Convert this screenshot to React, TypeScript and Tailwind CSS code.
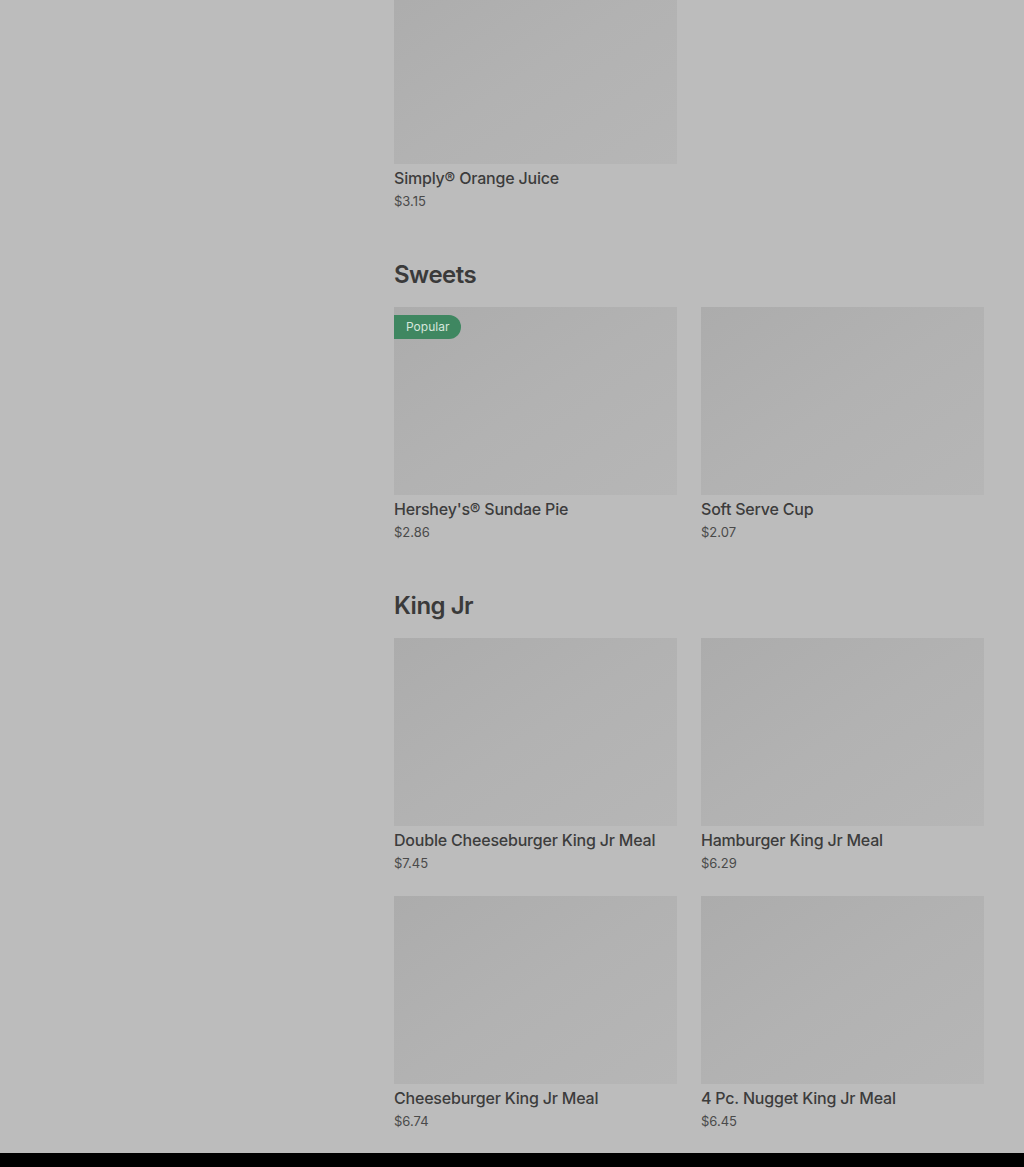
const sections = [
  {
    title: null as string | null,
    items: [{ name: "Simply® Orange Juice", price: "$3.15" }],
  },
  {
    title: "Sweets",
    items: [
      { name: "Hershey's® Sundae Pie", price: "$2.86", popular: true },
      { name: "Soft Serve Cup", price: "$2.07" },
    ],
  },
  {
    title: "King Jr",
    items: [
      { name: "Double Cheeseburger King Jr Meal", price: "$7.45" },
      { name: "Hamburger King Jr Meal", price: "$6.29" },
      { name: "Cheeseburger King Jr Meal", price: "$6.74" },
      { name: "4 Pc. Nugget King Jr Meal", price: "$6.45" },
    ],
  },
];

type Item = { name: string; price: string; popular?: boolean };

function ItemCard({ item }: { item: Item }) {
  return (
    <div className="flex flex-col">
      <div className="relative h-[188px] w-full bg-gradient-to-br from-[#acacac] via-[#b2b2b2] to-[#b6b6b6]">
        {item.popular && (
          <span className="absolute left-0 top-2 rounded-r-full bg-[#3f8761] py-[3px] pl-3 pr-3 text-[12px] leading-[18px] text-[#d6e6dc]">
            Popular
          </span>
        )}
      </div>
      <div className="mt-[4px] text-[16px] font-medium leading-[20px] tracking-[-0.2px] text-[#3c3c3c]">{item.name}</div>
      <div className="mt-[3px] text-[13px] leading-[20px] text-[#4a4a4a]">{item.price}</div>
    </div>
  );
}

export default function App() {
  return (
    <div className="flex h-[1167px] flex-col overflow-hidden bg-[#bcbcbc] font-['Inter',sans-serif]">
      <div className="h-[1153px] overflow-hidden">
        <div className="ml-[394px] mt-[-24px] w-[590px]">
          {sections.map((section, i) => (
            <section key={i} className={i === 0 ? "" : "mt-[48px]"}>
              {section.title && (
                <h2 className="mb-[16px] text-[24px] font-semibold leading-[32px] tracking-[-0.5px] text-[#3a3a3a]">
                  {section.title}
                </h2>
              )}
              <div className="grid grid-cols-2 gap-x-6 gap-y-[23px]">
                {section.items.map((item) => (
                  <ItemCard key={item.name} item={item} />
                ))}
              </div>
            </section>
          ))}
        </div>
      </div>
      <div className="h-[14px] bg-black" />
    </div>
  );
}
